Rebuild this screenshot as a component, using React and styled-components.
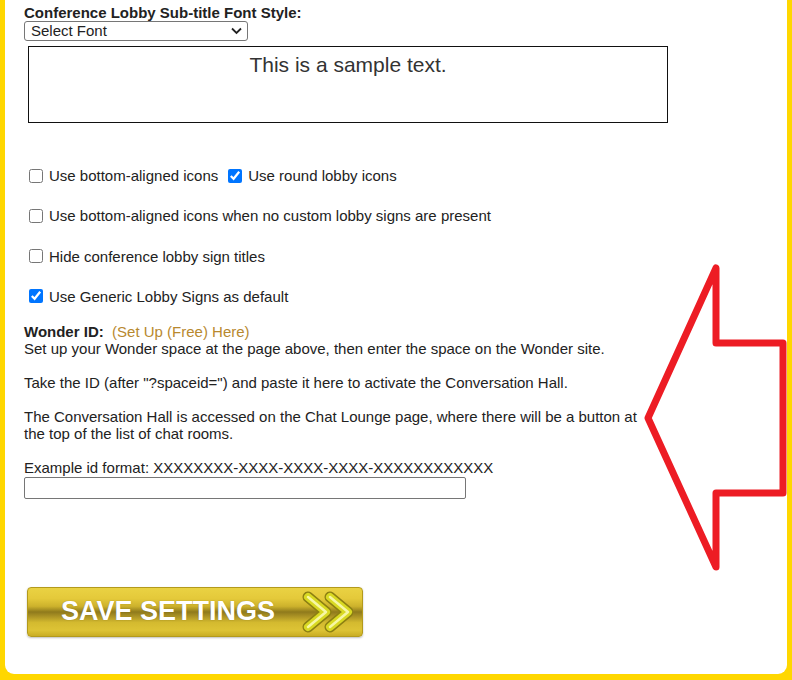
import React from 'react';
import styled, { createGlobalStyle } from 'styled-components';

const GlobalStyle = createGlobalStyle`
  html, body {
    margin: 0;
    padding: 0;
    background: #ffd700;
  }
  body {
    font-family: "Liberation Sans", Arial, sans-serif;
    font-size: 15px;
    color: #222;
  }
`;

// Cadre blanc dans la bordure jaune
const Frame = styled.div`
  position: relative;
  box-sizing: border-box;
  margin: 0 5px;
  height: 674px;
  background: #fff;
  border-radius: 0 0 9px 9px;
  padding: 4px 0 0 19px;
  overflow: hidden;
`;

const Heading = styled.div`
  font-weight: bold;
  line-height: 17px;
`;

const SelectWrap = styled.div`
  position: relative;
  width: 224px;
  height: 20px;
`;

const FontSelect = styled.select`
  display: block;
  box-sizing: border-box;
  width: 100%;
  height: 100%;
  margin: 0;
  padding: 0 20px 0 6px;
  appearance: none;
  font-family: "Liberation Sans", Arial, sans-serif;
  font-size: 15px;
  line-height: 18px;
  color: #222;
  background: #fff;
  border: 1px solid #767676;
  border-radius: 3px;
`;

const Caret = styled.svg`
  position: absolute;
  right: 6px;
  top: 6px;
  pointer-events: none;
`;

const SampleBox = styled.div`
  box-sizing: border-box;
  width: 640px;
  height: 77px;
  margin: 5px 0 0 4px;
  padding-top: 6px;
  border: 1px solid #111;
  text-align: center;
  font-size: 21px;
  color: #333;
`;

const OptionRow = styled.div`
  display: flex;
  align-items: center;
  height: 20px;
  margin-top: ${(p) => (p.$first ? '42.5px' : '20.3px')};
`;

const Check = styled.input.attrs({ type: 'checkbox' })`
  width: 14px;
  height: 14px;
  margin: 0 6px 0 ${(p) => (p.$spaced ? '10px' : '5px')};
  accent-color: #0075ff;
`;

const Info = styled.div`
  margin-top: 18px;
  line-height: 16.9px;
`;

const Strong = styled.b`
  font-weight: bold;
`;

const SetupLink = styled.a`
  color: #b8892f;
  text-decoration: none;
`;

const IdInput = styled.input.attrs({ type: 'text' })`
  display: block;
  box-sizing: border-box;
  width: 442px;
  height: 22px;
  margin: 0;
  border: 1px solid #767676;
  border-radius: 2px;
`;

const SaveButton = styled.button`
  display: flex;
  align-items: center;
  box-sizing: border-box;
  width: 336px;
  height: 50px;
  margin: 88px 0 0 3px;
  padding: 0 0 0 33px;
  border: 1px solid #b39a1c;
  border-radius: 4px;
  background: linear-gradient(
    to bottom,
    #ead243 0%,
    #e4c93a 22%,
    #cdb22c 38%,
    #8f7a1c 50%,
    #a89024 58%,
    #d4ba2f 72%,
    #ddc335 88%,
    #c9ad24 100%
  );
  box-shadow: 0 1px 2px rgba(0, 0, 0, 0.25);
  cursor: pointer;
`;

const SaveLabel = styled.span`
  font-family: "Liberation Sans", Arial, sans-serif;
  font-weight: bold;
  font-size: 27px;
  color: #fff;
  text-shadow: 0 0 1px rgba(80, 60, 0, 0.5);
`;

const Chevrons = styled.svg`
  margin-left: 24px;
`;

const ArrowOverlay = styled.svg`
  position: absolute;
  left: 0;
  top: 0;
  width: 100%;
  height: 100%;
  pointer-events: none;
`;

const ChevronShape = ({ x }) => {
  const d = `M${x} 6 L${x + 18} 21 L${x} 36`;
  return (
    <g>
      <path d={d} fill="none" stroke="#8c7f12" strokeWidth="11" strokeLinecap="round" strokeLinejoin="round" />
      <path d={d} fill="none" stroke="#d9d923" strokeWidth="8" strokeLinecap="round" strokeLinejoin="round" />
      <path d={d} fill="none" stroke="#f7f7a6" strokeWidth="2.5" strokeLinecap="round" strokeLinejoin="round" />
    </g>
  );
};

const App = () => {
  return (
    <>
      <GlobalStyle />
      <Frame>
        <Heading>Conference Lobby Sub-title Font Style:</Heading>
        <SelectWrap>
          <FontSelect defaultValue="">
            <option value="">Select Font</option>
            <option value="arial">Arial</option>
            <option value="times">Times New Roman</option>
          </FontSelect>
          <Caret width="11" height="8" viewBox="0 0 11 8">
            <path d="M1 1.5 L5.5 6 L10 1.5" fill="none" stroke="#222" strokeWidth="1.8" />
          </Caret>
        </SelectWrap>
        <SampleBox>This is a sample text.</SampleBox>

        <OptionRow $first>
          <Check />
          <span>Use bottom-aligned icons</span>
          <Check $spaced defaultChecked />
          <span>Use round lobby icons</span>
        </OptionRow>
        <OptionRow>
          <Check />
          <span>Use bottom-aligned icons when no custom lobby signs are present</span>
        </OptionRow>
        <OptionRow>
          <Check />
          <span>Hide conference lobby sign titles</span>
        </OptionRow>
        <OptionRow>
          <Check defaultChecked />
          <span>Use Generic Lobby Signs as default</span>
        </OptionRow>

        <Info>
          <Strong>Wonder ID:</Strong>&nbsp; <SetupLink href="#">(Set Up (Free) Here)</SetupLink>
          <br />
          Set up your Wonder space at the page above, then enter the space on the Wonder site.
          <br />
          <br />
          Take the ID (after "?spaceid=") and paste it here to activate the Conversation Hall.
          <br />
          <br />
          The Conversation Hall is accessed on the Chat Lounge page, where there will be a button at
          <br />
          the top of the list of chat rooms.
          <br />
          <br />
          Example id format: XXXXXXXX-XXXX-XXXX-XXXX-XXXXXXXXXXXX
        </Info>
        <IdInput />

        <SaveButton type="button">
          <SaveLabel>SAVE SETTINGS</SaveLabel>
          <Chevrons width="54" height="42" viewBox="0 0 54 42">
            <ChevronShape x={9} />
            <ChevronShape x={31} />
          </Chevrons>
        </SaveButton>

        <ArrowOverlay>
          <polygon
            points="711,268 711,343 778,343 778,493 711,493 711,567 643,418"
            fill="none"
            stroke="#ed1c24"
            strokeWidth="7"
            strokeLinejoin="round"
          />
        </ArrowOverlay>
      </Frame>
    </>
  );
};

export default App;
